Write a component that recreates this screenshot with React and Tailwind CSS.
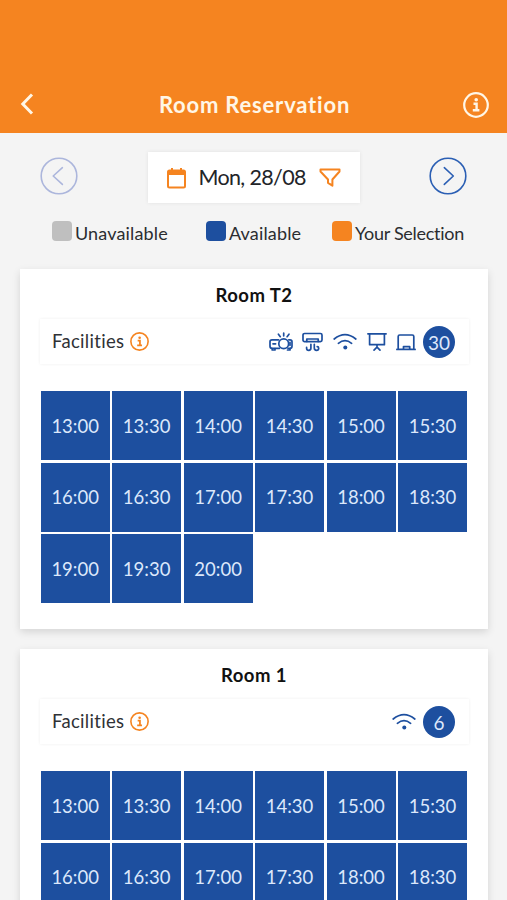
const BLUE = '#1d4f9f';

const rooms = [
  {
    name: 'Room T2',
    seats: 30,
    facilities: ['projector', 'aircon', 'wifi', 'board', 'laptop'],
    slots: ['13:00', '13:30', '14:00', '14:30', '15:00', '15:30', '16:00', '16:30', '17:00', '17:30', '18:00', '18:30', '19:00', '19:30', '20:00'],
  },
  {
    name: 'Room 1',
    seats: 6,
    facilities: ['wifi'],
    slots: ['13:00', '13:30', '14:00', '14:30', '15:00', '15:30', '16:00', '16:30', '17:00', '17:30', '18:00', '18:30'],
  },
];

const legend = [
  { label: 'Unavailable', box: 'bg-[#bfbfbf]', text: 'tracking-[0.15px] w-[134px]' },
  { label: 'Available', box: 'bg-[#1d4f9f]', text: 'tracking-[0.15px] w-[106px]' },
  { label: 'Your Selection', box: 'bg-[#f58420]', text: 'tracking-[-0.28px]' },
];

function InfoIcon({ className, strokeWidth }) {
  return (
    <svg viewBox="0 0 26 26" fill="none" stroke="currentColor" strokeWidth={strokeWidth} className={className}>
      <circle cx="13" cy="13" r="11.8" />
      <path d="M10.5 11.8H13.6V18M9.8 18.2H16.4" strokeWidth="2.4" />
      <circle cx="13.2" cy="7.8" r="1.8" fill="currentColor" stroke="none" />
    </svg>
  );
}

function DayButton({ next }) {
  return (
    <button className={next ? '-mt-[3px] text-[#2b5fb4]' : '-mt-[3px] text-[#acb6dc]'}>
      <svg width="38" height="38" viewBox="0 0 38 38" fill="none" stroke="currentColor" strokeWidth="1.6" strokeLinecap="round" strokeLinejoin="round">
        <circle cx="19" cy="19" r="17.8" />
        <path d={next ? 'M15.3 10.7L24.3 19L15.3 27.4' : 'M22.4 10.7L13.2 19L22.4 27.4'} />
      </svg>
    </button>
  );
}

function FacilityIcon({ name }) {
  const props = { height: 22, fill: 'none', stroke: BLUE, strokeWidth: 1.7, strokeLinecap: 'round', strokeLinejoin: 'round' };

  if (name === 'projector') {
    return (
      <svg {...props} width="24" viewBox="0 0 24 22">
        <path d="M9.6 8.8H3Q1 8.8 1 10.8V15.3Q1 17.3 3 17.3H10.4M19.8 8.8H21Q23 8.8 23 10.8V15.3Q23 17.3 21 17.3H19" />
        <circle cx="14.7" cy="12.8" r="4.9" />
        <path d="M3.2 17.5V19H6V17.5M18.5 19H21V17.5M4 12.8H6.6M21 11.3V14.3" />
        <path d="M9.4 3.2L11.3 5.7M14.7 2.2V4.8M20 3.2L18.1 5.7" />
      </svg>
    );
  }
  if (name === 'aircon') {
    return (
      <svg {...props} width="21" viewBox="0 0 21 22">
        <rect x="1" y="2.5" width="19" height="8.2" rx="1.6" />
        <path d="M4.8 10.4V8H16.2V10.4" />
        <path d="M8.9 13.3V17Q8.9 19.3 6.8 19.3Q4.6 19.3 4.6 17.2V16.4M12.3 13.3V17Q12.3 19.3 14.5 19.3Q16.7 19.3 16.7 17.2Q16.7 15.6 15.2 15.6" />
      </svg>
    );
  }
  if (name === 'wifi') {
    return (
      <svg {...props} width="24" viewBox="0 0 24 22">
        <path d="M1.2 8Q12 -0.6 22.8 8M5.4 12.3Q12 7 18.6 12.3" />
        <circle cx="12.3" cy="16.5" r="2" fill={BLUE} stroke="none" />
      </svg>
    );
  }
  if (name === 'board') {
    return (
      <svg {...props} width="20" viewBox="0 0 20 22">
        <path d="M0.9 2.8H19.1M2.6 2.8V13.7H17.4V2.8M10 14V16.3M7 19.2L10 16.2L13 19.2" />
      </svg>
    );
  }
  return (
    <svg {...props} width="20" viewBox="0 0 20 22">
      <path d="M2.2 17V5.5Q2.2 4 3.7 4H16.3Q17.8 4 17.8 5.5V17M0.9 18.4H19.1" />
      <path d="M7.5 18.2V15.6H13.7V18.2" />
    </svg>
  );
}

function RoomCard({ room }) {
  return (
    <section className="h-[360px] shrink-0 bg-white px-5 shadow-[0_3px_8px_rgba(0,0,0,0.13)]">
      <h2 className="pt-[13px] text-center text-[18.5px] leading-[26px] font-bold tracking-[0.45px] text-[#111]">{room.name}</h2>
      <div className="mt-[11px] -mr-[1px] flex h-[45px] items-center bg-white pr-[14px] pl-3 shadow-[0_0_3px_rgba(0,0,0,0.07)]">
        <span className="w-[78px] pt-px text-[18.5px] tracking-[0.3px] text-[#303236]">Facilities</span>
        <InfoIcon className="size-[19px] text-[#f58420]" strokeWidth={2.2} />
        <div className="ml-auto flex items-center gap-[9.7px]">
          {room.facilities.map((name) => (
            <FacilityIcon key={name} name={name} />
          ))}
          <span className="-ml-[3px] flex size-8 items-center justify-center rounded-full bg-[#1d4f9f] pt-[3px] text-[19px] text-[#dce8fb]">{room.seats}</span>
        </div>
      </div>
      <div className="mt-[27px] ml-[0.7px] grid w-[426.3px] grid-cols-6 gap-[2.5px]">
        {room.slots.map((time) => (
          <button key={time} className="h-[69px] bg-[#1d4f9f] pt-[2px] text-[18.5px] text-[#dce8fb]">
            {time}
          </button>
        ))}
      </div>
    </section>
  );
}

export default function App() {
  return (
    <div className="flex h-[900px] w-[507px] flex-col overflow-hidden bg-[#f4f4f4] font-['Lato',sans-serif]">
      {/* Header */}
      <header className="flex h-[133px] shrink-0 items-end justify-between bg-[#f58420] pr-[18px] pb-[15.5px] pl-5 text-[#fff6e6]">
        <svg width="26" height="26" viewBox="0 0 26 26" fill="none" stroke="currentColor" strokeWidth="3" className="mb-[1px]">
          <path d="M12 3.5L2.8 13L12 22.5" />
        </svg>
        <h1 className="text-[22px] leading-[26px] font-bold tracking-[0.8px]">Room Reservation</h1>
        <InfoIcon className="size-[26px]" strokeWidth={2.2} />
      </header>

      {/* Date picker */}
      <div className="mt-[19px] flex shrink-0 items-center justify-between px-[40px]">
        <DayButton />
        <div className="flex h-[51px] w-[212px] items-center bg-white pl-[19px] shadow-[0_0_4px_rgba(0,0,0,0.08)]">
          <svg width="19" height="22" viewBox="0 0 19 22" fill="none" stroke="#f58420" strokeWidth="2">
            <rect x="1" y="3.5" width="17" height="17" rx="1.5" />
            <path d="M1 6H18" strokeWidth="4" />
            <path d="M5 1V4M14 1V4" />
          </svg>
          <span className="ml-[13px] w-[107px] text-[21.5px] tracking-[-0.65px] whitespace-nowrap text-[#222428]">Mon, 28/08</span>
          <svg width="22" height="22" viewBox="0 0 22 22" fill="none" stroke="#f58420" strokeWidth="2" strokeLinejoin="round" className="ml-[13px]">
            <path d="M1.5 2.5H20.5V4.5L13.4 12.5V18.7L9 15.8V12.5L1.5 4.5Z" />
          </svg>
        </div>
        <DayButton next />
      </div>

      {/* Legend */}
      <div className="mt-[17px] flex h-[26px] shrink-0 pl-[52px]">
        {legend.map((item) => (
          <div key={item.label} className="flex">
            <span className={`mt-px size-5 shrink-0 rounded-[4px] ${item.box}`} />
            <span className={`pl-[3px] text-[18px] leading-[26px] whitespace-nowrap text-[#2b2d30] ${item.text}`}>{item.label}</span>
          </div>
        ))}
      </div>

      {/* Rooms */}
      <main className="mt-[23px] mr-[19px] ml-5 flex flex-col gap-5">
        {rooms.map((room) => (
          <RoomCard key={room.name} room={room} />
        ))}
      </main>
    </div>
  );
}
